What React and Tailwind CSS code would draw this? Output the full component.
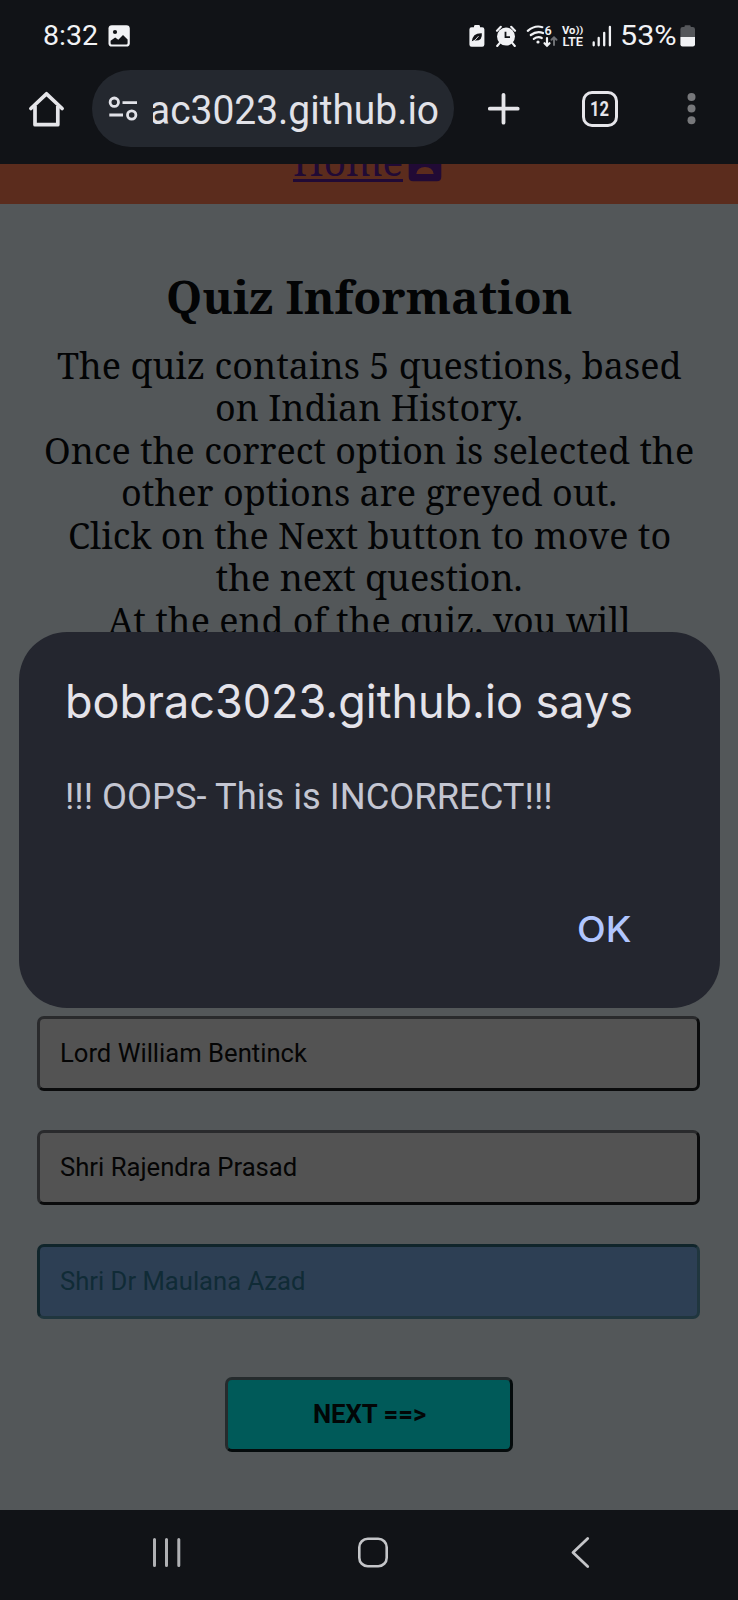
import { useLayoutEffect, useRef } from "react";

const SERIF = "font-['Noto_Serif','DejaVu_Serif',serif]";

/* Single line of text stretched to an exact width. */
function Fit({ w, className = "", textClass = "", children }) {
  const ref = useRef(null);
  useLayoutEffect(() => {
    const el = ref.current;
    const fit = () => {
      el.style.transform = "none";
      el.style.transform = `scaleX(${w / el.offsetWidth})`;
    };
    fit();
    document.fonts?.ready.then(fit);
  }, [w]);
  return (
    <span className={`block shrink-0 whitespace-nowrap ${className}`} style={{ width: w }}>
      <span ref={ref} className={`inline-block origin-left align-top ${textClass}`}>{children}</span>
    </span>
  );
}

function StatusBar() {
  return (
    <div className="flex h-[70px] items-start pt-[21px]">
      <Fit w={55} className="ml-[42.500px] h-[30px] text-[27px] leading-[30px] text-[#f1f2f5]">8:32</Fit>
      <svg className="mt-1 ml-[10.500px]" width="22" height="22" viewBox="0 0 22 22">
        <rect x="0.5" y="0.2" width="21.3" height="21.4" rx="3.4" fill="#f1f2f5" />
        <circle cx="7" cy="7" r="2.1" fill="#111317" />
        <path d="M2.6 15.8 7.200 12.400 10.300 14.800 15 10l4.600 4.600v3.600q0 1.400-1.400 1.400H4q-1.400 0-1.400-1.400z" fill="#111317" />
      </svg>
      <svg className="mt-[3px] ml-[338px]" width="150" height="24" viewBox="0 0 150 24" fill="none">
        <path d="M6 3.2V2.4Q6 1 7.4 1h3.2Q12 1 12 2.4v.8h2.2q2.2 0 2.2 2.2V20.600q0 2.200-2.200 2.200H3.600Q1.400 22.800 1.400 20.600V5.400Q1.400 3.200 3.600 3.200z" fill="#f1f2f5" />
        <path d="M3.800 17.600Q4.500 8.800 13.800 9.200q1 8-7.300 7.300z" fill="#111317" />
        <path d="M3 18.300Q7.500 16.800 10.500 12.200" stroke="#f1f2f5" strokeWidth="0.9" />
        <circle cx="38" cy="12.600" r="9" fill="#f1f2f5" />
        <path d="M29 6.800 32.800 2.800M47 6.800 43.200 2.800M31.800 18.800l-2.600 3.200M44.200 18.800l2.600 3.200" stroke="#f1f2f5" strokeWidth="2.100" strokeLinecap="round" />
        <path d="M37.500 7.800V13.200H42" stroke="#111317" strokeWidth="1.800" />
        <g stroke="#f1f2f5" strokeWidth="2.200" strokeLinecap="round">
          <path d="M59.800 6.800Q67 .8 74.300 3.200" />
          <path d="M62.800 11Q69 6.400 75 9" />
          <path d="M65.800 14.800Q70 12 73.800 14" />
          <path d="M79 14.200V21.500M76.500 19.200 79 21.700 81.500 19.200" />
        </g>
        <circle cx="70" cy="18" r="1.600" fill="#f1f2f5" />
        <path d="M86 21V13.500M83.500 15.800 86 13.300 88.500 15.800" stroke="#6d6f73" strokeWidth="2" strokeLinecap="round" />
        <text x="76.500" y="10.500" fontSize="12.500" fontWeight="600" fill="#f1f2f5" fontFamily="Roboto, sans-serif">6</text>
        <text x="94" y="10.200" fontSize="11" fontWeight="700" fill="#f1f2f5" fontFamily="Roboto, sans-serif" textLength="13.500" lengthAdjust="spacingAndGlyphs">Vo</text>
        <text x="107.800" y="9" fontSize="9.500" fontWeight="700" fill="#f1f2f5" fontFamily="Roboto, sans-serif" textLength="7.500" lengthAdjust="spacingAndGlyphs">))</text>
        <text x="94.500" y="22.400" fontSize="12.500" fontWeight="600" fill="#f1f2f5" fontFamily="Roboto, sans-serif" textLength="20.500" lengthAdjust="spacingAndGlyphs">LTE</text>
        <path d="M125.700 18.500V21.300M130.700 14V21.300M136.200 8.800V21.300M141.900 3V21.300" stroke="#f1f2f5" strokeWidth="2.300" strokeLinecap="round" />
      </svg>
      <Fit w={56.5} className="ml-[2px] h-[30px] text-[27px] leading-[30px] text-[#f1f2f5]">53%</Fit>
      <svg className="mt-1 ml-[3.500px]" width="16" height="22" viewBox="0 0 16 22">
        <path d="M4.500 2V1.300Q4.500.2 5.600.2h4Q10.700.2 10.700 1.300V2h2q2.300 0 2.300 2.300V12H.4V4.300Q.4 2 2.700 2z" fill="#55575b" />
        <path d="M.4 12H15v7.300q0 2.200-2.200 2.200H2.600Q.4 21.500.4 19.300z" fill="#f1f2f5" />
      </svg>
    </div>
  );
}

function Toolbar() {
  return (
    <div className="flex h-[94px] items-start">
      <svg className="mt-[19px] ml-7" width="38" height="40" viewBox="0 0 38 40" fill="none" stroke="#e5e5e9" strokeWidth="3.700">
        <path d="M2.900 19.500 18.500 4.800 34.100 19.500" strokeLinejoin="round" strokeLinecap="round" />
        <path d="M7 17V35.700H29.800V17" strokeLinejoin="round" />
      </svg>
      <div className="ml-[26px] flex h-[77px] w-[362px] rounded-full bg-[#24282f]">
        <svg className="mt-[25px] ml-[16px] shrink-0" width="32" height="28" viewBox="0 0 32 28" fill="none" stroke="#e1e2e8" strokeWidth="2.800">
          <circle cx="6.300" cy="7.200" r="4.200" />
          <path d="M14.500 7.700H29M1.300 20H15" />
          <circle cx="23.700" cy="20" r="4.200" />
        </svg>
        <div className="ml-[13px] flex h-[77px] w-[285.500px] justify-end overflow-hidden">
          <Fit w={290} className="pt-[17.500px] text-[40px] leading-[46px] text-[#e1e2e8]">ac3023.github.io</Fit>
        </div>
      </div>
      <svg className="mt-[22px] ml-[33px]" width="34" height="34" viewBox="0 0 34 34">
        <path d="M16.500 2.800V30.700M2.800 16.700H30.700" stroke="#e5e5e9" strokeWidth="3.800" strokeLinecap="round" />
      </svg>
      <div className="mt-[21px] ml-[61px] flex h-[35.500px] w-[35.500px] items-center justify-center rounded-[10px] border-[3.500px] border-[#e5e5e9] text-[20px] leading-none font-bold text-[#e5e5e9]"><Fit w={19}>12</Fit></div>
      <svg className="mt-[22px] ml-[68px]" width="12" height="34" viewBox="0 0 12 34" fill="#77787b">
        <circle cx="5.500" cy="5" r="4" /><circle cx="5.500" cy="16.600" r="4" /><circle cx="5.500" cy="28.300" r="4" />
      </svg>
    </div>
  );
}

const info = [
  ["The quiz contains 5 questions, based", 624],
  ["on Indian History.", 308],
  ["Once the correct option is selected the", 650],
  ["other options are greyed out.", 496],
  ["Click on the Next button to move to", 603],
  ["the next question.", 307],
  ["At the end of the quiz, you will", 523],
];

function Option({ children, w, chosen }) {
  return (
    <div className={`mb-[38.600px] h-[75.200px] rounded-[7px] border-[3px] pl-[19.500px] pt-5 text-[25px] leading-[30px] ${chosen
      ? "border-t-[#10252b] border-l-[#10252b] border-r-[#20363e] border-b-[#20363e] bg-[#2d3f54] text-[#102b36]"
      : "border-t-[#292a2c] border-l-[#292a2c] border-r-[#0a0b0c] border-b-[#0a0b0c] bg-[#535353] text-[#050505]"}`}>
      <Fit w={w}>{children}</Fit>
    </div>
  );
}

function Page() {
  return (
    <div className="h-[1345.500px] overflow-hidden bg-[#535759]">
      <div className="flex h-[40px] justify-center overflow-hidden bg-[#5b2c1d]">
        <div className="-mt-[30px] mr-[4px] flex h-[60px] items-start text-[#210a35]">
          <Fit w={110} className="h-[47.500px] border-b-[3px] border-[#210a35]" textClass={`text-[38px] leading-[54px] ${SERIF}`}>Home</Fit>
          <svg className="mt-[12.500px] ml-[5px]" width="34" height="35" viewBox="0 0 34 35">
            <path fillRule="evenodd" fill="#210a35" d="M5.200 1H28.800q4.500 0 4.500 4.500V29.800q0 4.500-4.500 4.500H5.200Q.7 34.300.7 29.800V5.500Q.7 1 5.200 1zM8.300 27H25.700Q24.500 20 17 20T8.300 27zM17 7a5 5 0 1 0 0 10a5 5 0 1 0 0-10z" />
          </svg>
        </div>
      </div>
      <div className={`flex h-[812px] flex-col items-center pt-[62.500px] text-[#030405] ${SERIF}`}>
        <h1 className="text-[45px] leading-[60px] font-bold"><Fit w={406}>Quiz Information</Fit></h1>
        <div className="mt-[18px] text-[36px] leading-[42.500px]">
          {info.map(([t, w]) => (
            <div key={t} className="flex justify-center"><Fit w={w}>{t}</Fit></div>
          ))}
        </div>
      </div>
      <div className="pr-[38px] pl-[37px]">
        <Option w={247}>Lord William Bentinck</Option>
        <Option w={237}>Shri Rajendra Prasad</Option>
        <Option w={246} chosen>Shri Dr Maulana Azad</Option>
      </div>
      <div className="pt-5 pl-[225px]">
        <div className="flex h-[75px] w-[288px] justify-center rounded-[7px] border-[3px] border-t-[#252b2d] border-r-[#050b0c] border-b-[#050b0c] border-l-[#252b2d] bg-[#005a59] pt-5 text-[25px] leading-[30px] font-bold text-[#020606]">
          <Fit w={113}>NEXT ==&gt;</Fit>
        </div>
      </div>
    </div>
  );
}

function Dialog() {
  return (
    <div className="absolute top-[632px] left-[18.500px] flex h-[375.500px] w-[701px] flex-col rounded-[48px] bg-[#24262f] px-[46px] pt-[38.500px]">
      <Fit w={568} className="font-['Inter',sans-serif] text-[46px] leading-[60px] text-[#e4e3ea]">bobrac3023.github.io says</Fit>
      <Fit w={487.5} className="mt-[44.500px] text-[36px] leading-[44px] text-[#c4c6d2]">!!! OOPS- This is INCORRECT!!!</Fit>
      <Fit w={54} className="mt-[88px] ml-[512.500px] font-['Inter',sans-serif] text-[36px] leading-[44px] font-medium text-[#b1c6ff]">OK</Fit>
    </div>
  );
}

function NavBar() {
  return (
    <div className="flex h-[90.500px] items-start bg-[#111317] pt-[26.500px]">
      <svg className="ml-[150px]" width="34" height="34" viewBox="0 0 34 34" stroke="#b0b1b4" strokeWidth="3" strokeLinecap="round">
        <path d="M4.500 3.500V29.500M16.500 3.500V29.500M28.800 3.500V29.500" />
      </svg>
      <svg className="ml-[172px]" width="34" height="34" viewBox="0 0 34 34" fill="none" stroke="#c4c5c8" strokeWidth="2.600">
        <rect x="3.300" y="2.800" width="27.400" height="27.400" rx="8.500" />
      </svg>
      <svg className="ml-[174px]" width="34" height="34" viewBox="0 0 34 34" fill="none" stroke="#c4c5c8" strokeWidth="2.800" strokeLinecap="round" strokeLinejoin="round">
        <path d="M23.700 2.500 9 16.500 23.700 30.500" />
      </svg>
    </div>
  );
}

export default function App() {
  return (
    <div className="relative h-[1600px] w-[738px] overflow-hidden bg-[#111317] font-['Roboto',sans-serif]">
      <StatusBar />
      <Toolbar />
      <Page />
      <NavBar />
      <Dialog />
    </div>
  );
}
